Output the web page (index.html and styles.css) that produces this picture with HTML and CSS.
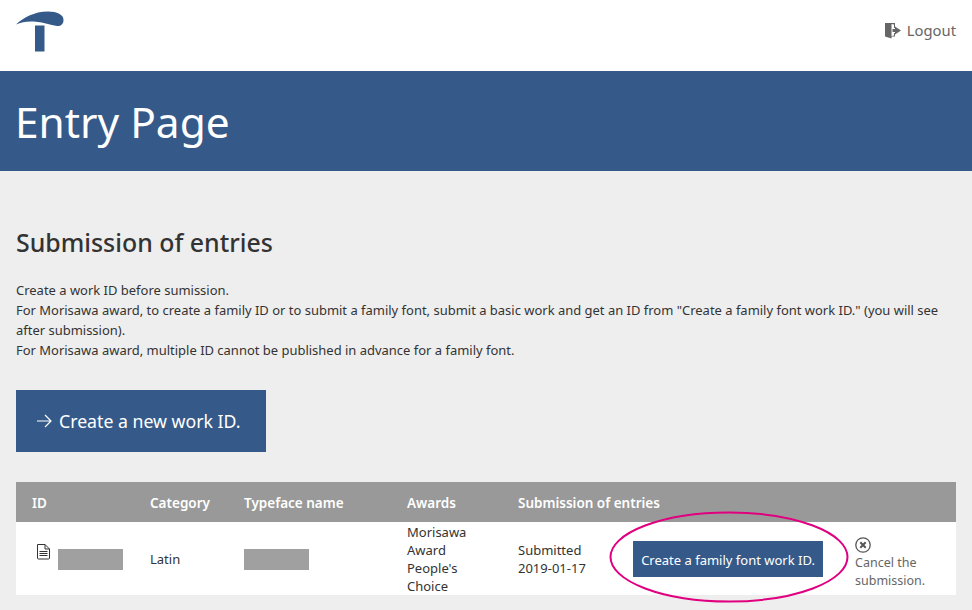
FILE: index.html
```html
<!DOCTYPE html>
<html lang="en">
<head>
<meta charset="utf-8">
<title>Entry Page</title>
<link rel="stylesheet" href="styles.css">
</head>
<body>
<header class="topbar">
  <svg class="logo" width="50" height="41" viewBox="0 0 50 41"><path fill="#355a8a" d="M0 13.500C7 7 18 .5 32 .5c9 0 15.500 3 15.500 8.500 0 4.500-3 6.300-6.500 6C34 14 28 11.500 20 10.800 12 10 6 11 0 13.500Z"/><rect fill="#355a8a" x="19" y="14.500" width="9.500" height="26"/></svg>
  <a class="logout" href="#">
    <svg width="17" height="17" viewBox="0 0 17 17"><path fill="#666" d="M0 1h10v5H9V2.500L6.500 2v12L9 13.500V11h1v3.500H6.500V16.500L0 14.500Z"/><path fill="#666" d="M10 7V4.500L16 8.500 10 12.500V10H7.500V7Z"/></svg>
    <span>Logout</span>
  </a>
</header>
<section class="banner"><h1>Entry Page</h1></section>
<main class="content">
  <h2>Submission of entries</h2>
  <div class="intro">
    <p>Create a work ID before sumission.</p>
    <p>For Morisawa award, to create a family ID or to submit a family font, submit a basic work and get an ID from "Create a family font work ID." (you will see after submission).</p>
    <p>For Morisawa award, multiple ID cannot be published in advance for a family font.</p>
  </div>
  <a class="new-btn" href="#">
    <svg width="15" height="14" viewBox="0 0 15 14"><path fill="none" stroke="#fff" stroke-width="1.200" d="M0 7h14M8 1l6 6-6 6"/></svg>
    <span>Create a new work ID.</span>
  </a>
  <div class="table">
    <div class="thead">
      <div>ID</div><div>Category</div><div>Typeface name</div><div>Awards</div><div class="span2">Submission of entries</div>
    </div>
    <div class="trow">
      <div class="id-cell">
        <svg class="doc" width="15" height="17" viewBox="0 0 15 17"><path fill="none" stroke="#333" d="M1.500 1.500h7.500l4.500 4.500v9q0 1-1 1h-10q-1 0-1-1Z"/><path fill="none" stroke="#333" d="M9 1.500v4.500h4.500M3.500 8.500h8M3.500 10.500h8M3.500 12.500h8"/></svg>
        <span class="mask"></span>
      </div>
      <div>Latin</div>
      <div><span class="mask mask-plain"></span></div>
      <div class="awards">Morisawa Award People's Choice</div>
      <div>Submitted 2019-01-17</div>
      <div class="action-cell">
        <a class="family-btn" href="#">Create a family font work ID.</a>
        <svg class="ring" width="240" height="92" viewBox="0 0 240 92"><ellipse cx="120" cy="46" rx="118.500" ry="44.500" fill="none" stroke="#e0007f" stroke-width="2"/></svg>
      </div>
      <div class="cancel-cell">
        <svg class="cancel-icon" width="16" height="16" viewBox="0 0 16 16"><circle cx="8" cy="8" r="7.200" fill="none" stroke="#555" stroke-width="1.300"/><path stroke="#555" stroke-width="2" d="M5.300 5.300l5.400 5.400M10.700 5.300l-5.400 5.400"/></svg>
        <span>Cancel the submission.</span>
      </div>
    </div>
  </div>
</main>
</body>
</html>
```
FILE: styles.css
```css
* { box-sizing: border-box; }
html, body { margin: 0; padding: 0; }
body {
  background: #eeeeee;
  color: #333;
  font-family: "Noto Sans", "Open Sans", sans-serif;
  height: 610px;
  overflow: hidden;
}
a { text-decoration: none; color: inherit; }
.topbar {
  height: 71px;
  background: #fff;
  display: flex;
  justify-content: space-between;
  align-items: flex-start;
  padding: 11px 16px 0;
}
.logo { display: block; }
.logout {
  display: flex;
  align-items: center;
  gap: 5px;
  margin-top: 9px;
  color: #666;
  font-size: 14.800px;
  line-height: 20px;
}
.banner {
  height: 100px;
  background: #355a8a;
  padding: 2px 16px 0 15px;
  display: flex;
  align-items: center;
}
h1 {
  margin: 0;
  color: #fff;
  font-weight: 400;
  font-size: 42.4px;
  line-height: 60px;
}
.content { padding: 53px 16px 0; }
h2 {
  margin: 0;
  font-weight: 500;
  font-size: 24.900px;
  line-height: 36px;
}
.intro {
  margin-top: 20px;
  font-size: 12.980px;
  line-height: 20px;
}
.intro p { margin: 0; }
.new-btn {
  display: flex;
  align-items: center;
  gap: 7px;
  width: 250px;
  height: 62px;
  margin-top: 30px;
  padding-left: 21px;
  background: #355a8a;
  color: #fff;
  font-size: 17.700px;
}
.table { margin-top: 30px; font-size: 13px; }
.thead, .trow {
  display: grid;
  grid-template-columns: 118px 94px 163px 111px 115px 228px 111px;
  background: #fff;
}
.thead {
  height: 40px;
  padding-top: 2px;
  background: #999;
  color: #fff;
  font-weight: 600;
  font-size: 13.500px;
  align-items: center;
}
.thead > div, .trow > div { padding-left: 16px; }
.span2 { grid-column: span 3; }
.trow {
  height: 73px;
  align-items: center;
  line-height: 18px;
}
.trow > .id-cell {
  display: flex;
  align-items: flex-start;
  gap: 7px;
  padding-left: 20px;
}
.doc { margin-top: -4px; }
.mask {
  display: block;
  width: 65px;
  height: 21px;
  margin-top: 2px;
  background: #a0a0a0;
}
.mask-plain { margin-top: 1px; }
.trow > .awards { padding-right: 16px; }
.action-cell { position: relative; }
.family-btn {
  display: block;
  width: 190px;
  height: 36px;
  line-height: 38px;
  text-align: center;
  background: #355a8a;
  color: #fff;
}
.ring {
  position: absolute;
  left: -8px;
  top: -30px;
  pointer-events: none;
}
.trow > .cancel-cell {
  align-self: start;
  padding-top: 15px;
  padding-left: 10px;
  color: #666;
  font-size: 12.500px;
  display: flex;
  flex-direction: column;
  align-items: flex-start;
}
.cancel-icon { margin-bottom: 1px; }
```
